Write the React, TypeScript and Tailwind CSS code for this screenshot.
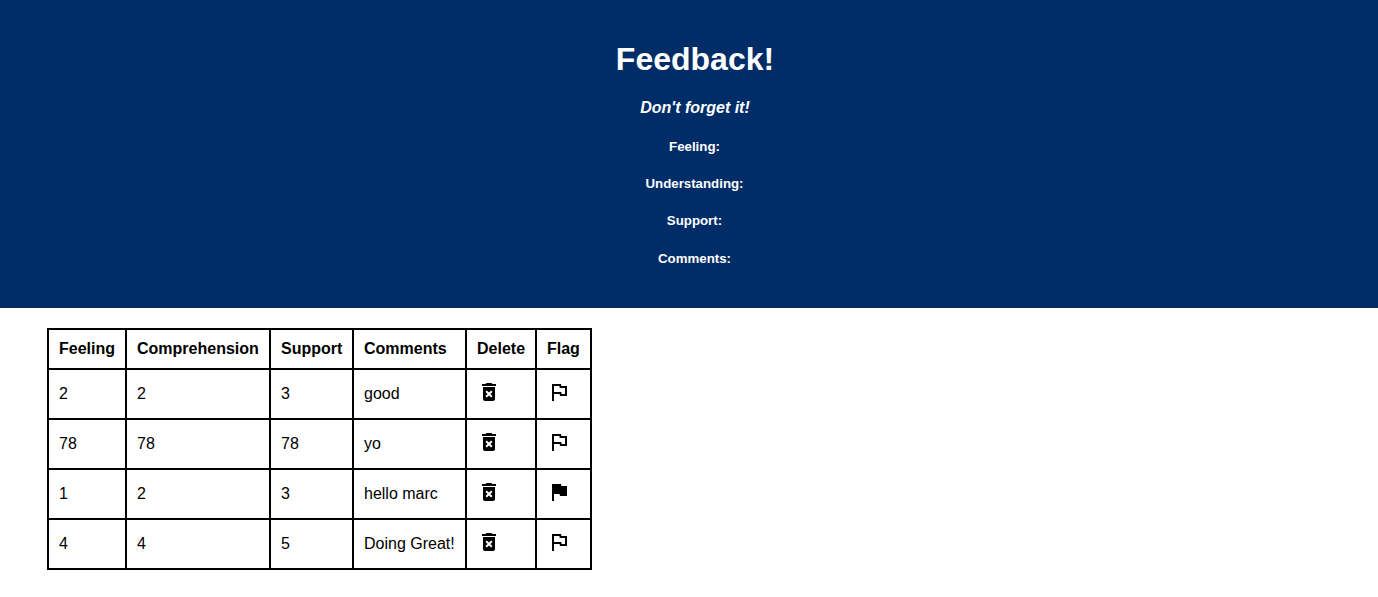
const rows = [
  { feeling: '2', comprehension: '2', support: '3', comments: 'good', flagged: false },
  { feeling: '78', comprehension: '78', support: '78', comments: 'yo', flagged: false },
  { feeling: '1', comprehension: '2', support: '3', comments: 'hello marc', flagged: true },
  { feeling: '4', comprehension: '4', support: '5', comments: 'Doing Great!', flagged: false },
];

const headings = ['Feeling', 'Comprehension', 'Support', 'Comments', 'Delete', 'Flag'];
const columns = 'grid grid-cols-[78px_144px_83px_113px_70px_55px]';
const cell = 'flex items-center border-r-2 border-b-2 border-black pl-[10px] whitespace-nowrap';
const iconCell = 'flex items-start border-r-2 border-b-2 border-black pt-[10px] pl-[10px]';

function DeleteIcon() {
  return (
    <svg viewBox="0 0 24 24" className="size-6" fill="currentColor">
      <path d="M6 19c0 1.1.9 2 2 2h8c1.1 0 2-.9 2-2V7H6v12zm2.46-7.12l1.41-1.41L12 12.59l2.12-2.12 1.41 1.41L13.41 14l2.12 2.12-1.41 1.41L12 15.41l-2.12 2.12-1.41-1.41L10.59 14l-2.13-2.12zM15.5 4l-1-1h-5l-1 1H5v2h14V4z" />
    </svg>
  );
}

function FlagIcon({ filled }: { filled: boolean }) {
  return (
    <svg viewBox="0 0 24 24" className="size-6" fill="currentColor">
      <path
        d={
          filled
            ? 'M14.4 6L14 4H5v17h2v-7h5.6l.4 2h7V6z'
            : 'M12.36 6l.4 2H18v6h-3.36l-.4-2H7V6h5.36M14 4H5v17h2v-7h5.6l.4 2h7V6h-5.6L14 4z'
        }
      />
    </svg>
  );
}

export default function App() {
  return (
    <div className="min-h-screen bg-white font-['Liberation_Sans',Arial,sans-serif] text-black">
      <header className="flex h-[308px] flex-col items-center bg-[#002d67] pt-[41px] pl-3 text-center font-bold text-white">
        <h1 className="text-[32px] leading-[37px]">Feedback!</h1>
        <p className="mt-[21px] text-base leading-[18px] italic">Don't forget it!</p>
        <div className="mt-[22px] flex flex-col pr-px text-[13.28px] leading-[15px]">
          <p>Feeling:</p>
          <p className="mt-[22px]">Understanding:</p>
          <p className="mt-[22px]">Support:</p>
          <p className="mt-[23px]">Comments:</p>
        </div>
      </header>
      <main className="pt-5 pl-[47px]">
        <div role="table" className="w-[545px] border-t-2 border-l-2 border-black text-base">
          <div role="row" className={`${columns} h-10 font-bold`}>
            {headings.map((heading) => (
              <div role="columnheader" key={heading} className={cell}>{heading}</div>
            ))}
          </div>
          {rows.map((row) => (
            <div role="row" key={row.comments} className={`${columns} h-[50px]`}>
              <div role="cell" className={cell}>{row.feeling}</div>
              <div role="cell" className={cell}>{row.comprehension}</div>
              <div role="cell" className={cell}>{row.support}</div>
              <div role="cell" className={cell}>{row.comments}</div>
              <div role="cell" className={iconCell}><button aria-label="Delete"><DeleteIcon /></button></div>
              <div role="cell" className={iconCell}><button aria-label="Flag"><FlagIcon filled={row.flagged} /></button></div>
            </div>
          ))}
        </div>
      </main>
    </div>
  );
}
